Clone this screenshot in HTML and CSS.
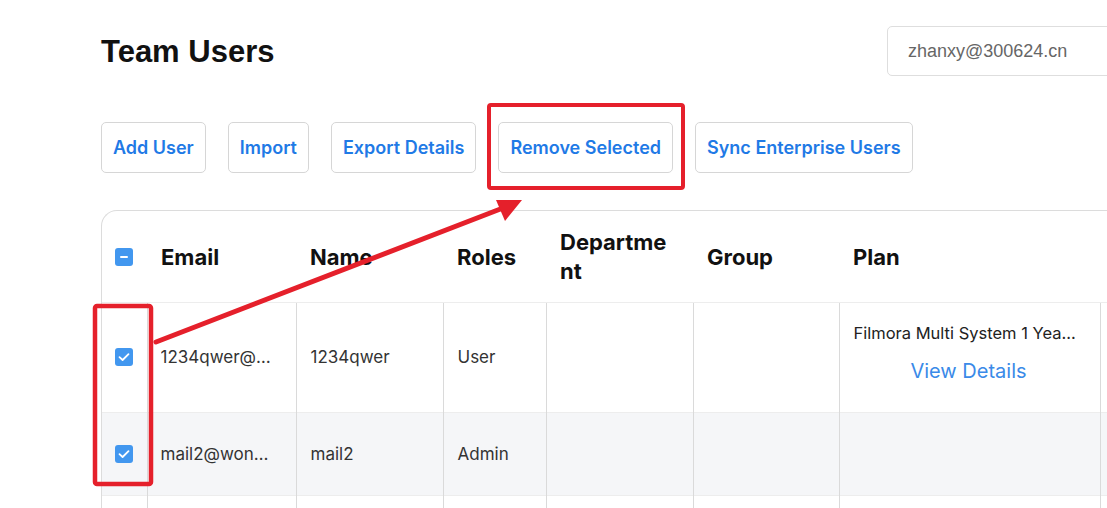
FILE: index.html
```html
<!DOCTYPE html>
<html>
<head>
<meta charset="utf-8">
<link rel="stylesheet" href="styles.css">
</head>
<body>
<div class="page">
  <div class="topbar">
    <h1 class="title">Team Users</h1>
    <div class="account">zhanxy@300624.cn</div>
  </div>
  <div class="actions">
    <button class="btn">Add User</button>
    <button class="btn">Import</button>
    <button class="btn">Export Details</button>
    <button class="btn">Remove Selected</button>
    <button class="btn">Sync Enterprise Users</button>
  </div>
  <div class="card">
    <table class="users">
      <colgroup>
        <col class="c-check"><col class="c-email"><col class="c-name"><col class="c-roles"><col class="c-dept"><col class="c-group"><col class="c-plan"><col class="c-more">
      </colgroup>
      <thead>
        <tr>
          <th class="check"><span class="cb"><svg viewBox="0 0 18 18" width="18" height="18"><rect x="5" y="8" width="8" height="2" rx="1" fill="#fff"/></svg></span></th>
          <th>Email</th>
          <th>Name</th>
          <th>Roles</th>
          <th>Department</th>
          <th>Group</th>
          <th>Plan</th>
          <th></th>
        </tr>
      </thead>
      <tbody>
        <tr class="r1">
          <td class="check"><span class="cb"><svg viewBox="0 0 18 18" width="18" height="18"><path d="M4.5 9.2 L7.6 12 L13.5 6.2" fill="none" stroke="#fff" stroke-width="1.8" stroke-linecap="round" stroke-linejoin="round"/></svg></span></td>
          <td class="email"><div class="ell">1234qwer@wondershare.com</div></td>
          <td>1234qwer</td>
          <td>User</td>
          <td></td>
          <td></td>
          <td class="plan">
            <div class="plan-name ell">Filmora Multi System 1 Year Plan</div>
            <div class="plan-link">View Details</div>
          </td>
          <td></td>
        </tr>
        <tr class="r2">
          <td class="check"><span class="cb"><svg viewBox="0 0 18 18" width="18" height="18"><path d="M4.5 9.2 L7.6 12 L13.5 6.2" fill="none" stroke="#fff" stroke-width="1.8" stroke-linecap="round" stroke-linejoin="round"/></svg></span></td>
          <td class="email"><div class="ell">mail2@wondershare.com</div></td>
          <td>mail2</td>
          <td>Admin</td>
          <td></td>
          <td></td>
          <td></td>
          <td></td>
        </tr>
        <tr class="r3">
          <td class="check"></td><td></td><td></td><td></td><td></td><td></td><td></td><td></td>
        </tr>
      </tbody>
    </table>
  </div>
</div>
<svg class="annot" width="1107" height="508" viewBox="0 0 1107 508">
  <rect x="489" y="105" width="194" height="83" rx="2" fill="none" stroke="#e5202b" stroke-width="4"/>
  <rect x="95" y="306" width="56" height="178" rx="2" fill="none" stroke="#e5202b" stroke-width="4.5"/>
  <line x1="156" y1="342" x2="503" y2="208" stroke="#e5202b" stroke-width="5" stroke-linecap="round"/>
  <polygon points="522,200 496,200 505,221" fill="#e5202b"/>
</svg>
</body>
</html>
```

FILE: styles.css
```css
* { box-sizing: border-box; }
html, body { margin: 0; padding: 0; background: #fff; }
body { width: 1107px; height: 508px; overflow: hidden; position: relative; font-family: Inter, "Liberation Sans", sans-serif; }
.page { padding-left: 101px; padding-top: 26px; width: 1400px; }
.topbar { display: grid; grid-template-columns: 786px 280px; align-items: center; height: 50px; }
.title { margin: 0; font-family: "Liberation Sans", Arial, sans-serif; font-weight: 700; font-size: 31px; line-height: 1; color: #111; }
.account { height: 50px; border: 1px solid #dedede; border-radius: 5px; padding-left: 20px; display: flex; align-items: center; font-family: "Liberation Sans", Arial, sans-serif; font-size: 18px; color: #666; }
.actions { display: flex; gap: 22px; margin-top: 46px; }
.btn { height: 51px; padding: 0 11px; border: 1px solid #d6d6d6; border-radius: 5px; background: #fff; font-family: Inter, "Liberation Sans", sans-serif; font-weight: 600; font-size: 18px; color: #1f7ae6; }
.card { margin-top: 37px; width: 1150px; border: 1px solid #dcdcdc; border-right: none; border-bottom: none; border-radius: 16px 0 0 0; overflow: hidden; }
.users { border-collapse: collapse; table-layout: fixed; width: 1148px; }
.c-check { width: 45px; } .c-email { width: 149px; } .c-name { width: 147px; } .c-roles { width: 103px; } .c-dept { width: 147px; } .c-group { width: 146px; } .c-plan { width: 261px; } .c-more { width: 150px; }
th { height: 91px; text-align: left; padding: 2px 14px 0; font-weight: 700; font-size: 22px; color: #111; word-break: break-all; line-height: 29px; vertical-align: middle; }
td { padding: 0 14px; font-size: 17px; color: #333; border-left: 1px solid #dadada; border-top: 1px solid #ededed; vertical-align: middle; }
td:first-child { border-left: none; }
td.email { padding-left: 13px; padding-right: 20px; }
.check { padding: 0 0 0 13px; }
th.check { padding: 2px 0 0 13px; }
.cb { display: block; width: 18px; height: 18px; border-radius: 3px; background: #4297ef; }
.cb svg { display: block; }
.r1 td { height: 110px; }
.r2 td { height: 83px; background: #f5f6f8; }
.r3 td { height: 40px; }
.ell { white-space: nowrap; overflow: hidden; text-overflow: ellipsis; }
.plan { padding-bottom: 8px; padding-right: 20px; }
.plan-name { font-size: 16.5px; color: #222; }
.plan-link { text-align: center; font-size: 20px; color: #3a8ae8; margin-top: 16px; padding-left: 4px; }
.annot { position: absolute; left: 0; top: 0; pointer-events: none; }
```
